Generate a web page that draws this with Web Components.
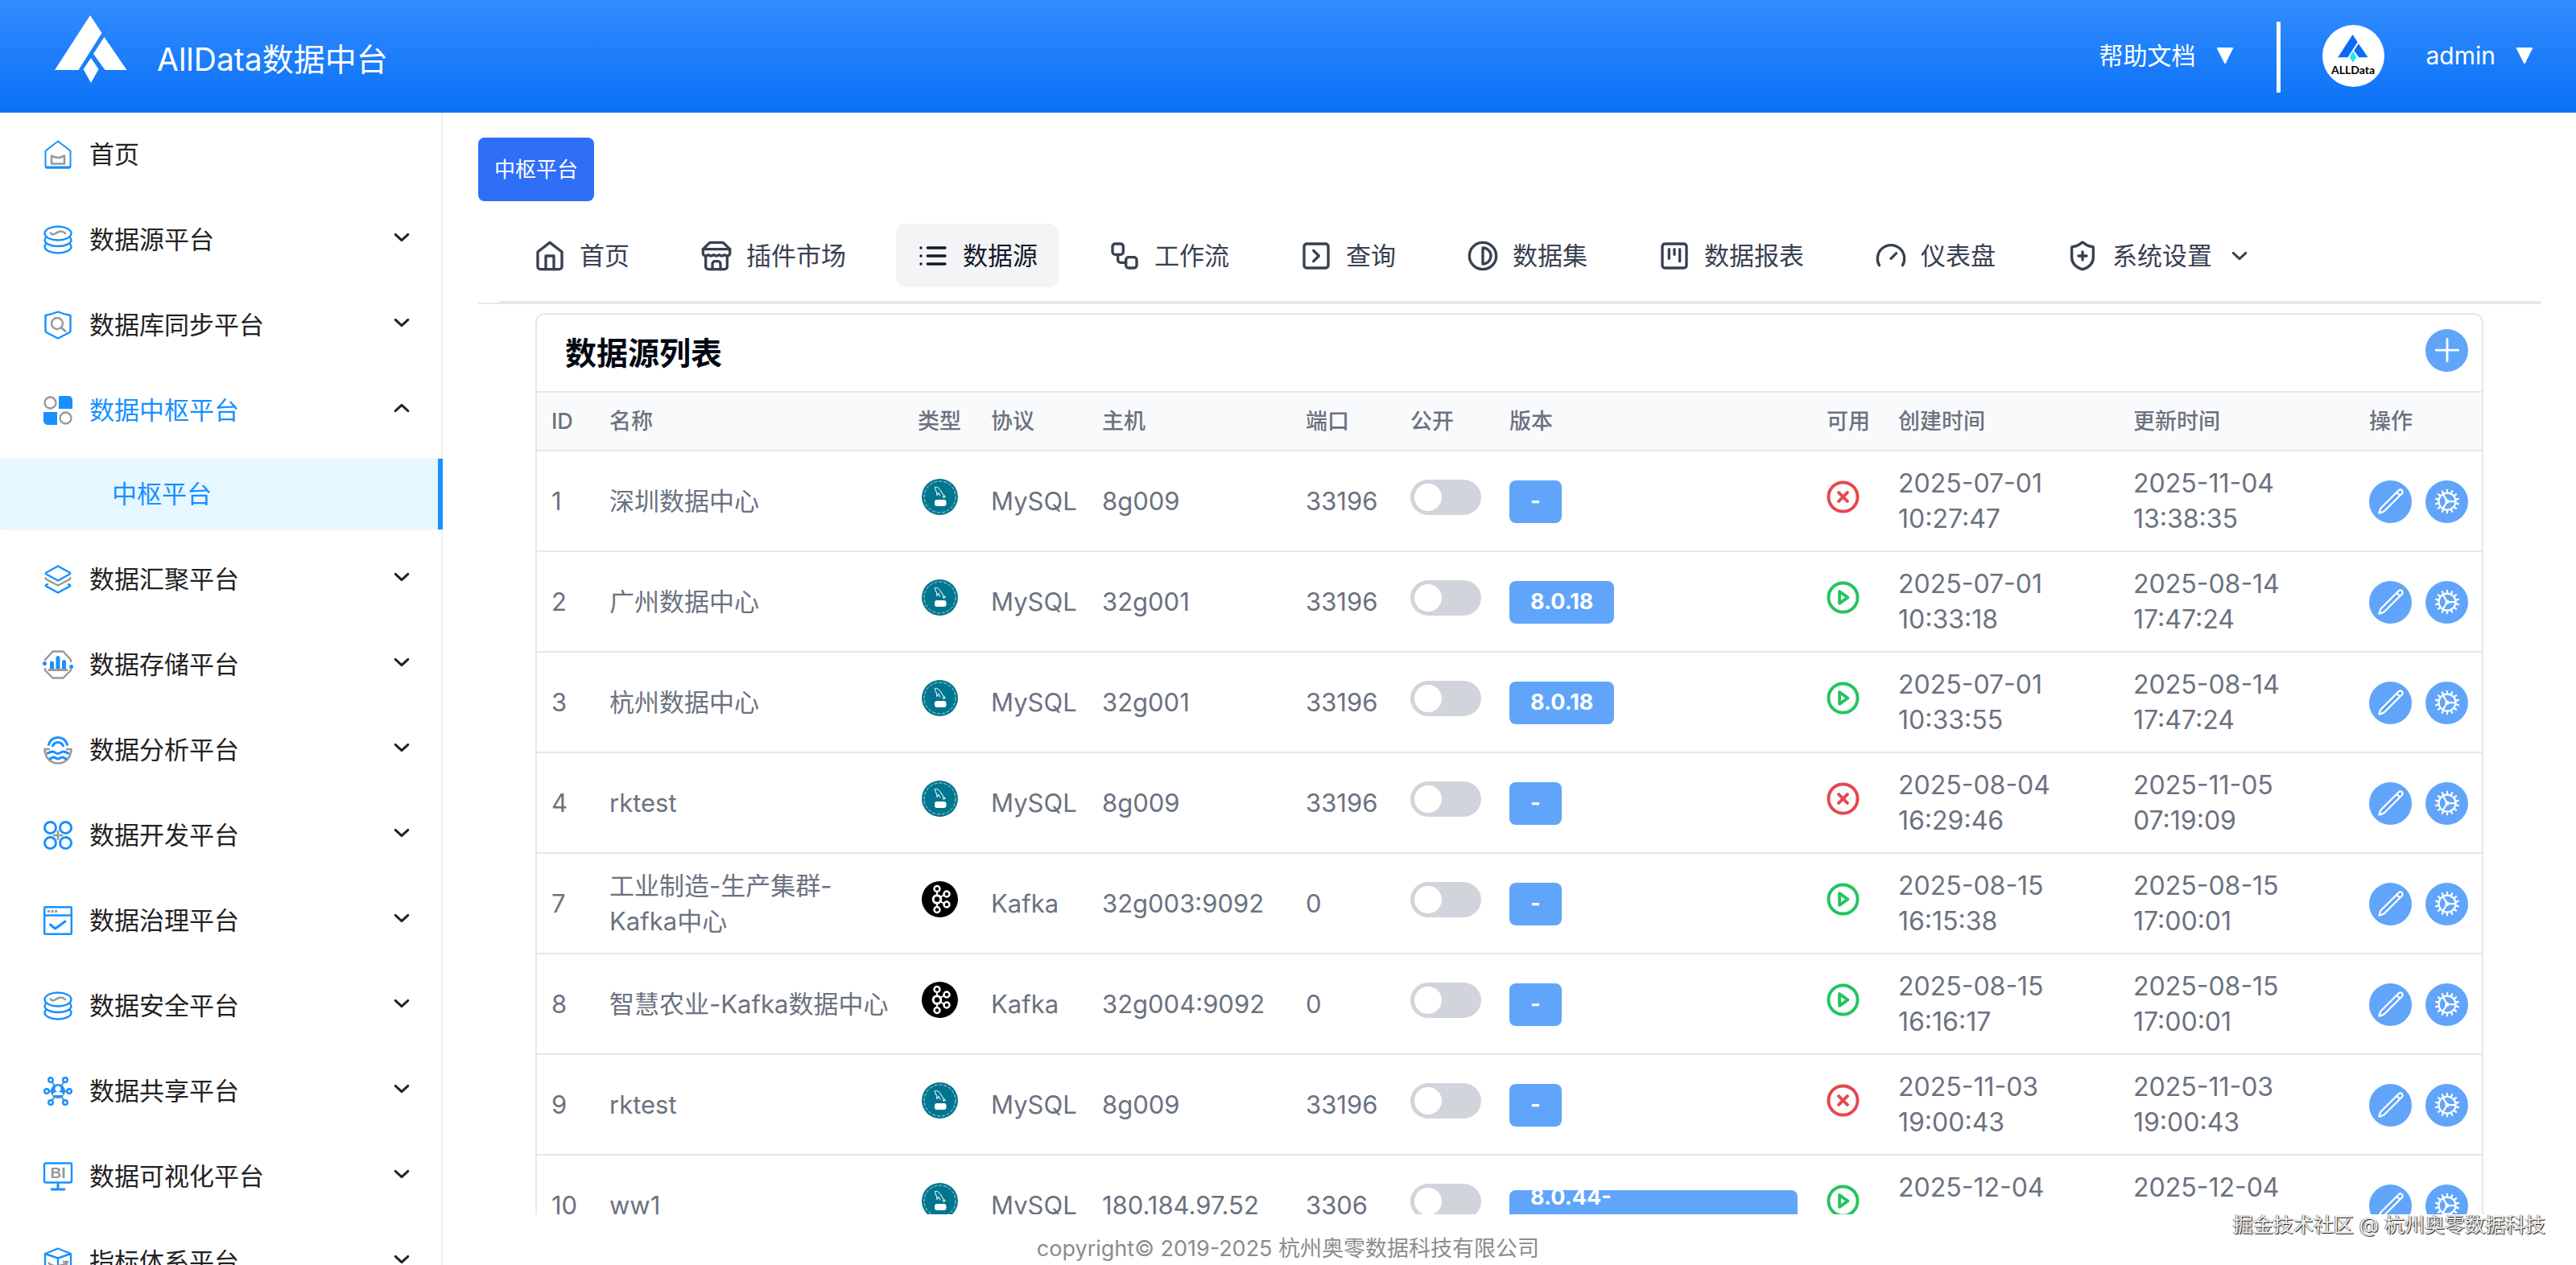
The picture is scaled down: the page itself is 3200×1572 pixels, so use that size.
<!DOCTYPE html>
<html lang="zh-CN">
<head>
<meta charset="utf-8">
<title>AllData数据中台</title>
<style>
  html, body { margin: 0; height: 100%; }
  body {
    font-family: Inter, "Noto Sans CJK SC", sans-serif;
    font-size: 31px;
    line-height: 44px;
    color: #262626;
    background: #fff;
  }
</style>
</head>
<body>
<app-shell>
  <app-header slot="header"></app-header>
  <side-menu slot="side">
    <menu-entry icon="home" leaf>首页</menu-entry>
    <menu-entry icon="database">数据源平台</menu-entry>
    <menu-entry icon="shield">数据库同步平台</menu-entry>
    <menu-entry icon="grid" open>数据中枢平台<sub-entry slot="children">中枢平台</sub-entry></menu-entry>
    <menu-entry icon="layers">数据汇聚平台</menu-entry>
    <menu-entry icon="storage">数据存储平台</menu-entry>
    <menu-entry icon="analysis">数据分析平台</menu-entry>
    <menu-entry icon="develop">数据开发平台</menu-entry>
    <menu-entry icon="govern">数据治理平台</menu-entry>
    <menu-entry icon="database">数据安全平台</menu-entry>
    <menu-entry icon="share">数据共享平台</menu-entry>
    <menu-entry icon="bi">数据可视化平台</menu-entry>
    <menu-entry icon="cube">指标体系平台</menu-entry>
  </side-menu>
  <page-tag slot="main">中枢平台</page-tag>
  <tab-bar slot="main">
    <tab-link icon="house">首页</tab-link>
    <tab-link icon="store">插件市场</tab-link>
    <tab-link icon="list" active>数据源</tab-link>
    <tab-link icon="workflow">工作流</tab-link>
    <tab-link icon="query">查询</tab-link>
    <tab-link icon="contrast">数据集</tab-link>
    <tab-link icon="kanban">数据报表</tab-link>
    <tab-link icon="gauge">仪表盘</tab-link>
    <tab-link icon="shieldplus" more>系统设置</tab-link>
  </tab-bar>
  <list-card slot="main" heading="数据源列表"><source-table></source-table></list-card>
  <span slot="footer">copyright© 2019-2025 杭州奥零数据科技有限公司</span>
  <span slot="mark">掘金技术社区 @ 杭州奥零数据科技</span>
</app-shell>

<script>
const B = '#1890ff', G = '#999';
const lucide = body => `<svg viewBox="0 0 24 24" fill="none" stroke="currentColor" stroke-width="2" stroke-linecap="round" stroke-linejoin="round">${body}</svg>`;
const thin = body => `<svg viewBox="0 0 24 24" fill="none" stroke="currentColor" stroke-width="1.5" stroke-linecap="round" stroke-linejoin="round">${body}</svg>`;
const menu = body => `<svg viewBox="0 0 36 36" fill="none" stroke-width="2.4" stroke-linejoin="round">${body}</svg>`;

/* gear rim teeth, evenly spaced round the centre */
const teeth = Array.from({ length: 14 }, (_, i) => `<path d="M12 4.800V2.500" transform="rotate(${i * 360 / 14} 12 12)"/>`).join('');

const ICONS = {
  /* side menu, two-tone */
  home: menu(`<path stroke="${B}" d="M18 1.500 33.500 13.500V32.500a2 2 0 0 1-2 2h-27a2 2 0 0 1-2-2V13.500z" stroke-width="2"/><path stroke="${B}" d="M3 34h30" stroke-width="3"/><path stroke="${G}" stroke-width="2.600" d="M10 19.500v10h16v-10c-2 0-3 2.500-8 2.500s-6-2.500-8-2.500z"/>`),
  database: menu(`<ellipse stroke="${B}" cx="18" cy="10" rx="16.500" ry="8.500"/><path stroke="${B}" d="M4 14c-2 2-2.500 3.500-2.500 4.500C1.500 22 8 26 18 26s16.500-4 16.500-7.500c0-1-.5-2.500-2.500-4.500M4 22.500C2 24 1.500 25.500 1.500 26.500 1.500 31 9 34.500 18 34.500s16.500-3.500 16.500-8c0-1-.5-2.500-2.500-4"/><path stroke="${G}" stroke-width="2.600" stroke-linecap="round" d="M9 9.500c2 4 6 .5 9-1s6-1.500 9 1.500"/>`),
  shield: menu(`<path stroke="${B}" d="M2.500 6Q10 4.500 18 1.500 26 4.500 33.500 6V25c0 1-.5 1.500-1 2L18 34.500 3.500 27c-.5-.5-1-1-1-2z"/><circle stroke="${G}" cx="17" cy="16" r="7"/><path stroke="${G}" stroke-width="2.800" stroke-linecap="round" d="m22 21 5 4.500"/>`),
  grid: menu(`<circle stroke="${G}" cx="8.500" cy="8.500" r="7"/><circle stroke="${G}" cx="27.500" cy="27.500" r="7"/><path fill="${B}" d="M19 0h12a5 5 0 0 1 5 5v11H19zM0 20h17v16H5a5 5 0 0 1-5-5z"/>`),
  layers: menu(`<path stroke="${G}" d="M3.500 15.500c-1 1-1 2 0 2.500L18 25.500 32.500 18c1-.5 1-1.500 0-2.500"/><path fill="#fff" stroke="${B}" d="M18 1.500 32.500 9.500c1 .7 1 1.300 0 2L18 19.500 3.500 11.500c-1-.7-1-1.300 0-2z"/><path stroke="${B}" d="M6 23.500l-2.500 1.300c-1 .5-1 1.200 0 1.800L18 34.500l14.500-7.900c1-.6 1-1.300 0-1.800L30 23.500"/>`),
  storage: menu(`<path stroke="${G}" d="M2 13v-1L11.500 1.500h13L34 12v3M2 22v3l9.500 9.500h13L34 25v-2"/><path stroke="${G}" stroke-width="3" stroke-linecap="round" d="M7 24.500h22"/><path fill="${B}" d="M8 23v-7a2.500 2.500 0 0 1 5 0v7zM15.500 23V9.500a2.500 2.500 0 0 1 5 0V23zM23 23v-8.500a2.500 2.500 0 0 1 5 0V23z"/><circle cx="1.500" cy="16.500" r="2.500" fill="${B}"/><circle cx="34.500" cy="20.500" r="2.500" fill="${B}"/>`),
  analysis: menu(`<path stroke="${B}" stroke-width="3" d="M6 12.500C8 5.500 12.500 2.500 18 2.500s10 3 12 10M11 14c1.500-4 4-5.500 7-5.500s5.500 1.500 7 5.500"/><path stroke="${G}" stroke-width="2.600" d="M8 17H1.500C2 28 9 34.500 18 34.500S34 28 34.500 17H28"/><path stroke="${B}" stroke-width="3" d="M4 22c4 0 4-2 7-2s4 2.500 7 2.500 4-2.500 7-2.500 3 2 7 2M7 29c3 0 3-2 5.500-2s3 2 5.500 2 3-2 5.500-2 2.500 2 5.500 2"/>`),
  develop: menu(`<path stroke="${G}" stroke-width="2.600" d="M18 12v12M12 18h12"/><g stroke="${B}" stroke-width="3"><circle cx="8.500" cy="8.500" r="7"/><circle cx="27.500" cy="8.500" r="7"/><circle cx="8.500" cy="27.500" r="7"/><circle cx="27.500" cy="27.500" r="7"/></g>`),
  govern: menu(`<rect stroke="${B}" x="1.200" y="1.200" width="33.600" height="33.600" rx="1"/><path stroke="${B}" d="M1 11.500h34"/><path stroke="${B}" stroke-width="3" stroke-linecap="round" d="m8.500 23 6 5L27 19"/><path fill="${G}" d="M5 5h3v3H5zM9.500 5h3v3h-3zM14 5h3v3h-3z"/>`),
  share: menu(`<path stroke="${G}" d="m9 4 9 14 9-14M4 18h28M9 32l9-14 9 14"/><circle cx="18" cy="18" r="9" fill="${B}"/><circle cx="18" cy="15" r="3.500" fill="#fff"/><path fill="#fff" d="M11.500 23c0-6 13-6 13 0z"/><g stroke="${B}" fill="#fff"><circle cx="9" cy="4" r="2.800"/><circle cx="27" cy="4" r="2.800"/><circle cx="4" cy="18" r="2.800"/><circle cx="32" cy="18" r="2.800"/><circle cx="9" cy="32" r="2.800"/><circle cx="27" cy="32" r="2.800"/></g>`),
  bi: menu(`<rect stroke="${B}" x="1" y="1.500" width="34" height="24" rx="2"/><path stroke="${B}" stroke-width="3" d="M18 26v8M9 34h18"/><text x="18" y="20" text-anchor="middle" font-family="Liberation Sans, sans-serif" font-weight="700" font-size="19" fill="${G}">BI</text>`),
  cube: menu(`<path stroke="${B}" d="M18 1.500 34 8v20L18 35 2 28V8zM2 8l16 5.500L34 8M18 13v21"/><path stroke="${G}" d="M6 19c5 6 16 5 23 0m-5-1 6 0-2 5"/>`),
  /* tabs */
  house: lucide('<path d="m3 9 9-7 9 7v11a2 2 0 0 1-2 2H5a2 2 0 0 1-2-2z"/><path d="M9 22V12h6v10"/>'),
  store: lucide('<path d="m2 7 4.410-4.410A2 2 0 0 1 7.830 2h8.340a2 2 0 0 1 1.420.590L22 7"/><path d="M4 12v8a2 2 0 0 0 2 2h12a2 2 0 0 0 2-2v-8"/><path d="M15 22v-4a2 2 0 0 0-2-2h-2a2 2 0 0 0-2 2v4"/><path d="M2 7h20"/><path d="M22 7v3a2 2 0 0 1-2 2a2.700 2.700 0 0 1-1.590-.630.700.700 0 0 0-.820 0A2.700 2.700 0 0 1 16 12a2.700 2.700 0 0 1-1.590-.630.700.700 0 0 0-.820 0A2.700 2.700 0 0 1 12 12a2.700 2.700 0 0 1-1.590-.630.700.700 0 0 0-.820 0A2.700 2.700 0 0 1 8 12a2.700 2.700 0 0 1-1.590-.630.700.700 0 0 0-.820 0A2.700 2.700 0 0 1 4 12a2 2 0 0 1-2-2V7"/>'),
  list: lucide('<path d="M8 6h13M8 12h13M8 18h13M3 6h.010M3 12h.010M3 18h.010"/>'),
  workflow: lucide('<rect x="3" y="3" width="8" height="8" rx="2"/><path d="M7 11v4a2 2 0 0 0 2 2h4"/><rect x="13" y="13" width="8" height="8" rx="2"/>'),
  query: lucide('<rect x="3" y="3" width="18" height="18" rx="2"/><path d="m10 8 4 4-4 4"/>'),
  contrast: lucide('<circle cx="12" cy="12" r="10"/><path d="M12 18a6 6 0 0 0 0-12v12z"/>'),
  kanban: lucide('<rect x="3" y="3" width="18" height="18" rx="2"/><path d="M8 7v7M12 7v4M16 7v9"/>'),
  gauge: lucide('<path d="m12 14 4-4"/><path d="M3.340 19a10 10 0 1 1 17.320 0"/>'),
  shieldplus: lucide('<path d="M20 13c0 5-3.500 7.500-7.660 8.950a1 1 0 0 1-.670-.010C7.500 20.500 4 18 4 13V6a1 1 0 0 1 1-1c2 0 4.500-1.200 6.240-2.720a1.170 1.170 0 0 1 1.520 0C14.510 3.810 17 5 19 5a1 1 0 0 1 1 1z"/><path d="M9 12h6M12 9v6"/>'),
  /* shared */
  down: '<svg viewBox="0 0 24 24" fill="none" stroke="currentColor" stroke-width="3.200" stroke-linecap="round" stroke-linejoin="round"><path d="m3.500 8 8.500 8 8.500-8"/></svg>',
  up: '<svg viewBox="0 0 24 24" fill="none" stroke="currentColor" stroke-width="3.200" stroke-linecap="round" stroke-linejoin="round"><path d="m3.500 16 8.500-8 8.500 8"/></svg>',
  caret: '<svg viewBox="0 0 20 20" fill="currentColor" stroke="currentColor" stroke-width="2" stroke-linejoin="round"><path d="M1 1h18L10 19z"/></svg>',
  plus: thin('<path d="M12 4.500v15M19.500 12h-15"/>'),
  pencil: thin('<path d="m16.862 4.487 1.687-1.688a1.875 1.875 0 1 1 2.652 2.652L6.832 19.820a4.500 4.500 0 0 1-1.897 1.130l-2.685.8.8-2.685a4.500 4.500 0 0 1 1.130-1.897L16.863 4.487Zm0 0L19.500 7.125"/>'),
  cog: thin(`<circle cx="12" cy="12" r="7"/>${teeth}<path d="M12 12h7M12 12 8.500 6M12 12l-3.500 6"/><circle cx="12" cy="12" r="1" fill="currentColor"/>`),
  ok: '<svg viewBox="0 0 42 42" fill="none" stroke="#22c55e" stroke-width="4" stroke-linejoin="round"><circle cx="21" cy="21" r="18.500"/><path d="M16.500 13.500v15L27 21z"/></svg>',
  fail: '<svg viewBox="0 0 42 42" fill="none" stroke="#e5484d" stroke-width="4" stroke-linecap="round"><circle cx="21" cy="21" r="18.500"/><path d="m15.500 15.500 11 11m0-11-11 11"/></svg>',
  mysql: '<svg viewBox="0 0 45 45" fill="none"><circle cx="22.500" cy="22.500" r="22.500" fill="#00758f"/><circle cx="22.500" cy="22.500" r="19.500" stroke="#b5dbe3" stroke-width="1" stroke-dasharray="4 2"/><path stroke="#d5ecf1" stroke-width="1.200" d="M16 10.500c3-1 6 1.500 8 5 1.500 3 2 4.500 5.500 7l-3-.5 1.500 2M16 10.500c1.500 2 .5 3.500 2 5s0 3.500 1 5l2-3 2 4"/><rect x="16" y="26" width="14.500" height="8" rx="3" fill="#fff"/></svg>',
  kafka: '<svg viewBox="0 0 45 45" fill="none" stroke="#fff"><circle cx="22.500" cy="22.500" r="22.500" fill="#000" stroke="none"/><path stroke-width="2" d="M19 13v5M19 27v5M23 20l5-3M23 25l5 3"/><circle cx="19" cy="9.500" r="3.500" stroke-width="2.500"/><circle cx="19" cy="22.500" r="4.800" stroke-width="3"/><circle cx="19" cy="35.500" r="3.500" stroke-width="2.500"/><circle cx="31" cy="16" r="3.500" stroke-width="2.500"/><circle cx="31" cy="29" r="3.500" stroke-width="2.500"/></svg>',
  logo: '<svg viewBox="0 0 90 84" fill="#fff"><path d="M44 0 58.500 22 29.500 68H0zM61.500 27 89.500 68H62.500L48 48zM45 53l9.500 14L45 84l-9.500-17z"/></svg>',
  brand: '<svg viewBox="0 0 90 84" fill="#0a6cf5"><path d="M44 0 58.500 22 29.500 68H0zM61.500 27 89.500 68H62.500L48 48z"/><path fill="#1ee3f0" d="M45 50l10 17-10 17-10-17z"/></svg>'
};

const define = (name, css, html) => customElements.define(name, class extends HTMLElement {
  connectedCallback() {
    if (this.shadowRoot) return;
    const root = this.attachShadow({ mode: 'open' });
    root.innerHTML = `<style>*{box-sizing:border-box}${css}</style>` + (typeof html === 'function' ? html(this) : html);
  }
});

define('ui-icon', ':host{display:inline-block;width:40px;height:40px;flex:none}svg{display:block;width:100%;height:100%;overflow:visible}',
  el => ICONS[el.getAttribute('name')]);

define('app-shell', `
  :host{display:grid;grid-template:auto minmax(0,1fr) auto / 550px minmax(0,1fr);height:100vh;overflow:hidden;position:relative}
  header{grid-area:1/1/2/3}
  aside{grid-area:2/1/4/2;overflow:hidden;box-shadow:inset -2px 0 #f0f0f0}
  main{grid-area:2/2/3/3;overflow:hidden;padding:31px 44px 0}
  footer{grid-area:3/1/4/3;padding:23px 0 0;line-height:40px;text-align:center;font-size:27px;color:#8c8c8c;pointer-events:none}
  .mark{position:absolute;right:38px;bottom:30px;font-size:25px;line-height:40px;color:#eee;text-shadow:1px 1px 1px #111,-1px 0 1px #888}`,
  `<header><slot name="header"></slot></header>
   <aside><slot name="side"></slot></aside>
   <main><slot name="main"></slot></main>
   <footer><slot name="footer"></slot></footer>
   <div class="mark"><slot name="mark"></slot></div>`);

define('app-header', `
  :host{display:flex;align-items:center;justify-content:space-between;height:138px;padding:0 54px 0 68px;color:#fff;font-size:30px;
    background:linear-gradient(#328cff,#0a71f6);border-bottom:2px solid #1b6fe0}
  .brand{display:flex;align-items:center;gap:37px;padding-bottom:17px}
  .brand ui-icon{width:90px;height:84px}
  h1{margin:0;padding-top:26px;font-size:39px;font-weight:400;line-height:56px}
  .tools{display:flex;align-items:center}
  button{display:flex;align-items:center;gap:26px;padding:0;border:0;background:none;color:inherit;font:inherit}
  button ui-icon{width:20px;height:20px}
  hr{width:5px;height:88px;margin:4px 52px 0 54px;border:0;background:#fff}
  .avatar{display:flex;flex-direction:column;align-items:center;width:77px;height:77px;margin-right:52px;padding-top:12px;border-radius:50%;background:#fff;color:#000;font:700 14px/14px Lato,sans-serif}
  .avatar ui-icon{width:38px;height:35px;margin-bottom:2px}`,
  `<div class="brand"><ui-icon name="logo"></ui-icon><h1>AllData数据中台</h1></div>
   <div class="tools">
     <button type="button">帮助文档<ui-icon name="caret"></ui-icon></button><hr>
     <div class="avatar"><ui-icon name="brand"></ui-icon>ALLData</div>
     <button type="button">admin<ui-icon name="caret"></ui-icon></button>
   </div>`);

define('side-menu', ':host{display:block}nav{display:flex;flex-direction:column;gap:18px;padding-top:8px}',
  '<nav aria-label="主菜单"><slot></slot></nav>');

define('menu-entry', `
  :host{display:flex;flex-direction:column;gap:16px}
  a,button{display:flex;align-items:center;width:100%;height:88px;padding:0 40px 0 54px;border:0;background:none;font:inherit;color:#222;text-decoration:none;text-align:left}
  :host([open]) .text{color:#1890ff}
  .text{flex:1;padding-left:21px}
  ui-icon{width:36px;height:36px}
  .arrow{width:22px;height:22px;margin-bottom:6px}`,
  el => {
    const open = el.hasAttribute('open');
    const inner = `<ui-icon name="${el.getAttribute('icon')}"></ui-icon><span class="text"><slot></slot></span>`;
    return el.hasAttribute('leaf') ? `<a href="#">${inner}</a>`
      : `<button type="button" aria-expanded="${open}">${inner}<ui-icon class="arrow" name="${open ? 'up' : 'down'}"></ui-icon></button>${open ? '<slot name="children"></slot>' : ''}`;
  });

define('sub-entry', ':host{display:block}a{display:flex;align-items:center;height:88px;padding-left:139px;background:#e6f7ff;border-right:6px solid #1890ff;color:#1890ff;text-decoration:none;box-shadow:0 0 12px #0000000a}',
  '<a href="#" aria-current="page"><slot></slot></a>');

define('page-tag', ':host{display:block}button{height:79px;padding:0 20px;border:0;border-radius:8px;background:#2f6ff5;color:#fff;font:inherit;font-size:26px}',
  '<button type="button"><slot></slot></button>');

define('tab-bar', ':host{display:block;padding-left:26px;border-bottom:2px solid #e5e7eb}nav{display:flex;gap:36px;padding:28px 0 17px 17px;border-bottom:2px solid #e5e7eb}',
  '<nav aria-label="功能导航"><slot></slot></nav>');

define('tab-link', `
  :host{display:block}
  a{display:flex;align-items:center;gap:17px;height:79px;padding:0 26px;border-radius:12px;color:#374151;text-decoration:none;white-space:nowrap}
  :host([active]) a{background:#f3f4f6;color:#111827}
  .more{width:22px;height:22px;margin-left:6px}`,
  el => `<a href="#"${el.hasAttribute('active') ? ' aria-current="page"' : ''}><ui-icon name="${el.getAttribute('icon')}"></ui-icon><span><slot></slot></span>${el.hasAttribute('more') ? '<ui-icon class="more" name="down"></ui-icon>' : ''}</a>`);

define('round-button', ':host{display:block}button{display:flex;align-items:center;justify-content:center;width:53px;height:53px;padding:0;border:0;border-radius:50%;background:#60a5fa;color:#fff}ui-icon{width:36px;height:36px}:host([large]) ui-icon{width:44px;height:44px}',
  el => `<button type="button" aria-label="${el.getAttribute('label')}"><ui-icon name="${el.getAttribute('icon')}"></ui-icon></button>`);

define('list-card', `
  :host{display:block;margin:11px 71px 0;border:2px solid #e5e7eb;border-radius:12px;background:#fff}
  header{display:flex;align-items:center;justify-content:space-between;height:97px;padding:0 17px 7px 35px;border-bottom:2px solid #e5e7eb}
  h2{margin:0;padding-top:8px;font-size:39px;line-height:56px;font-weight:700;color:#030712}`,
  el => `<header><h2>${el.getAttribute('heading')}</h2><round-button large icon="plus" label="新增数据源"></round-button></header><slot></slot>`);

define('toggle-switch', `
  :host{display:inline-block;width:88px;height:44px}
  input{appearance:none;display:block;width:88px;height:44px;margin:0;padding:5px;border-radius:22px;background:#d1d5db}
  input::before{content:"";display:block;width:34px;height:34px;border-radius:50%;background:#fff}`,
  el => `<input type="checkbox" role="switch" aria-label="${el.getAttribute('label')}">`);

define('version-badge', ':host{display:inline-flex;align-items:center;height:53px;padding:0 26px;border-radius:8px;background:#60a5fa;color:#fff;font-size:27px;font-weight:700;line-height:36px}', '<slot></slot>');

const COLUMNS = [['ID',72],['名称',382],['类型',92],['协议',138],['主机',253],['端口',130],['公开',123],['版本',394],['可用',89],['创建时间',292],['更新时间',293],['操作',158]];
const ROWS = [
  [1,'深圳数据中心','MySQL','8g009','33196','-',0,'2025-07-01 10:27:47','2025-11-04 13:38:35'],
  [2,'广州数据中心','MySQL','32g001','33196','8.0.18',1,'2025-07-01 10:33:18','2025-08-14 17:47:24'],
  [3,'杭州数据中心','MySQL','32g001','33196','8.0.18',1,'2025-07-01 10:33:55','2025-08-14 17:47:24'],
  [4,'rktest','MySQL','8g009','33196','-',0,'2025-08-04 16:29:46','2025-11-05 07:19:09'],
  [7,'工业制造-生产集群-Kafka中心','Kafka','32g003:9092','0','-',1,'2025-08-15 16:15:38','2025-08-15 17:00:01'],
  [8,'智慧农业-Kafka数据中心','Kafka','32g004:9092','0','-',1,'2025-08-15 16:16:17','2025-08-15 17:00:01'],
  [9,'rktest','MySQL','8g009','33196','-',0,'2025-11-03 19:00:43','2025-11-03 19:00:43'],
  [10,'ww1','MySQL','180.184.97.52','3306','8.0.44-0ubuntu0.22.04.1',1,'2025-12-04<br>&nbsp;','2025-12-04<br>&nbsp;']
];

define('source-table', `
  :host{display:block;color:#6b7280}
  table{width:100%;table-layout:fixed;border-collapse:separate;border-spacing:0}
  th,td{padding:18px 0 17px 18px;border-bottom:2px solid #e5e7eb;text-align:left;vertical-align:middle}
  th{font-size:27px;line-height:36px;font-weight:500;background:#f9fafb}
  th:nth-child(3),td:nth-child(3){padding-left:0;text-align:center}
  td:nth-child(2){padding-right:12px}
  td:nth-child(8){padding-right:18px}
  td:nth-child(10),td:nth-child(11){padding-right:60px;font-size:32px}
  .type{width:45px;height:45px}
  .state{width:41px;height:41px}
  .actions{display:flex;gap:17px}`,
  () => `<table><colgroup>${COLUMNS.map(c => `<col style="width:${c[1]}px">`).join('')}</colgroup>
    <thead><tr>${COLUMNS.map(c => `<th scope="col">${c[0]}</th>`).join('')}</tr></thead>
    <tbody>${ROWS.map(([id, name, kind, host, port, ver, ok, made, upd]) => `<tr><td>${id}</td><td>${name}</td>
      <td><ui-icon class="type" name="${kind.toLowerCase()}"></ui-icon></td><td>${kind}</td><td>${host}</td><td>${port}</td>
      <td><toggle-switch label="公开 ${name}"></toggle-switch></td><td><version-badge>${ver}</version-badge></td>
      <td><ui-icon class="state" name="${ok ? 'ok' : 'fail'}"></ui-icon></td><td>${made}</td><td>${upd}</td>
      <td><div class="actions"><round-button icon="pencil" label="编辑"></round-button><round-button icon="cog" label="设置"></round-button></div></td></tr>`).join('')}</tbody></table>`);
</script>
</body>
</html>
